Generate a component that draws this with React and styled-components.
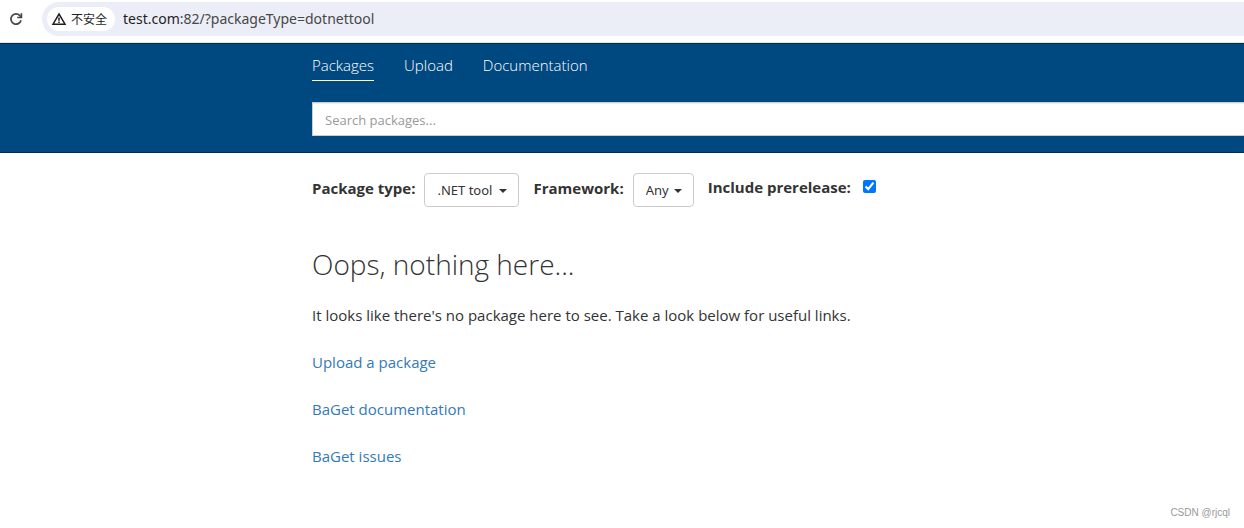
import styled, { createGlobalStyle } from "styled-components";

const GlobalStyle = createGlobalStyle`
  * {
    box-sizing: border-box;
  }

  body {
    margin: 0;
    background: #fff;
    color: #333;
    font-family: "Open Sans", "Noto Sans CJK SC", sans-serif;
    font-size: 15px;
    line-height: 24px;
  }
`;

const AddressBar = styled.div`
  display: flex;
  align-items: center;
  gap: 18px;
  padding: 2px 0 6px 8px;
  border-bottom: 1px solid #dfe6e0;
`;

const ReloadButton = styled.button`
  display: flex;
  padding: 0;
  border: 0;
  background: none;
  color: #474747;
`;

const Omnibox = styled.div`
  display: flex;
  flex: 1;
  align-items: center;
  gap: 8px;
  height: 34px;
  padding-left: 5px;
  border-radius: 17px 0 0 17px;
  background: #ebeef7;
`;

const SecurityChip = styled.span`
  display: flex;
  align-items: center;
  gap: 4px;
  height: 24px;
  padding: 0 8px 0 4px;
  border-radius: 12px;
  background: #fff;
  color: #1f1f1f;
  font-family: "Noto Sans CJK SC", sans-serif;
  font-size: 12px;
`;

const Url = styled.span`
  color: #474747;
  font-family: "Noto Sans", sans-serif;
  font-size: 14px;
`;

Url.Host = styled.span`
  color: #1f1f1f;
`;

const Header = styled.header`
  padding: 9px 0 16px 312px;
  border-top: 1px solid #002d50;
  border-bottom: 1px solid #002d50;
  background: #004880;
`;

const Nav = styled.nav`
  display: flex;
  gap: 30px;
  margin-bottom: 21px;
`;

const NavLink = styled.a`
  height: 28px;
  border-bottom: 1px solid ${(props) => (props.$active ? "#fff" : "transparent")};
  color: #fff;
  font-weight: 300;
  text-decoration: none;
`;

const SearchInput = styled.input`
  display: block;
  width: 100%;
  height: 34px;
  padding: 7px 12px 5px;
  border: 1px solid #ccc;
  border-right: 0;
  border-radius: 0;
  background: #fff;
  box-shadow: inset 0 1px 1px rgba(0, 0, 0, 0.08);
  color: #555;
  font-family: inherit;
  font-size: 13px;

  &::placeholder {
    color: #999;
  }
`;

const Main = styled.main`
  padding: 20px 16px 0 312px;
`;

const Filters = styled.form`
  display: flex;
  align-items: flex-start;
  gap: 14px;
`;

const Filter = styled.div`
  display: flex;
  align-items: ${(props) => props.$align || "center"};
  gap: ${(props) => props.$gap || "9px"};
`;

Filter.Label = styled.label`
  padding: ${(props) => props.$padding || "0 0 4px"};
  font-weight: 700;
  white-space: nowrap;
`;

const SelectWrapper = styled.div`
  position: relative;

  &::after {
    content: "";
    position: absolute;
    top: 16px;
    right: 12px;
    border-top: 4px solid #333;
    border-right: 4px solid transparent;
    border-left: 4px solid transparent;
    pointer-events: none;
  }
`;

const Select = styled.select`
  display: block;
  width: ${(props) => props.$width};
  height: 34px;
  padding: 0 12px;
  border: 1px solid #ccc;
  border-radius: 4px;
  appearance: none;
  background: #fff;
  color: #333;
  font-family: "Noto Sans", sans-serif;
  font-size: 13px;
`;

const Checkbox = styled.input`
  width: 13px;
  height: 13px;
  margin: 7px 0 0;
  accent-color: #0075ff;
`;

const Title = styled.h2`
  margin: 39px 0 21px;
  font-size: 28px;
  font-weight: 300;
  line-height: 36px;
`;

const Paragraph = styled.p`
  margin: 0 0 23px;
`;

const TextLink = styled.a`
  color: #337ab7;
  text-decoration: none;
`;

const Footer = styled.footer`
  padding: 10px 14px 0 0;
  color: #999;
  font-family: "Liberation Sans", Arial, sans-serif;
  font-size: 10px;
  text-align: right;
`;

const ReloadIcon = () => (
  <svg width="16" height="16" viewBox="0 0 16 16" fill="none" stroke="currentColor" strokeWidth="1.7">
    <path d="M13 9.2A5.1 5.1 0 1 1 11.8 4.6L13.2 6" />
    <path d="M13.4 2.2v4.3H9.2" />
  </svg>
);

const WarningIcon = () => (
  <svg width="16" height="16" viewBox="0 0 16 16" fill="none" stroke="currentColor" strokeWidth="1.5">
    <path d="M8 3L14 13.2H2z" />
    <path d="M8 6.4v3.4M8 10.6v1.4" />
  </svg>
);

const links = ["Upload a package", "BaGet documentation", "BaGet issues"];

const App = () => (
  <div>
    <GlobalStyle />
    <AddressBar>
      <ReloadButton type="button" aria-label="Reload">
        <ReloadIcon />
      </ReloadButton>
      <Omnibox>
        <SecurityChip>
          <WarningIcon />
          不安全
        </SecurityChip>
        <Url>
          <Url.Host>test.com</Url.Host>:82/?packageType=dotnettool
        </Url>
      </Omnibox>
    </AddressBar>
    <Header>
      <Nav>
        <NavLink href="#packages" $active>
          Packages
        </NavLink>
        <NavLink href="#upload">Upload</NavLink>
        <NavLink href="#documentation">Documentation</NavLink>
      </Nav>
      <SearchInput type="text" placeholder="Search packages..." aria-label="Search packages" />
    </Header>
    <Main>
      <Filters>
        <Filter>
          <Filter.Label htmlFor="package-type">Package type:</Filter.Label>
          <SelectWrapper>
            <Select id="package-type" $width="95px">
              <option>.NET tool</option>
            </Select>
          </SelectWrapper>
        </Filter>
        <Filter>
          <Filter.Label htmlFor="framework">Framework:</Filter.Label>
          <SelectWrapper>
            <Select id="framework" $width="61px">
              <option>Any</option>
            </Select>
          </SelectWrapper>
        </Filter>
        <Filter $align="flex-start" $gap="12px">
          <Filter.Label htmlFor="prerelease" $padding="2px 0">
            Include prerelease:
          </Filter.Label>
          <Checkbox id="prerelease" type="checkbox" defaultChecked />
        </Filter>
      </Filters>
      <Title>Oops, nothing here...</Title>
      <Paragraph>
        It looks like there's no package here to see. Take a look below for
        useful links.
      </Paragraph>
      {links.map((link) => (
        <Paragraph key={link}>
          <TextLink href="#">{link}</TextLink>
        </Paragraph>
      ))}
    </Main>
    <Footer>CSDN @rjcql</Footer>
  </div>
);

export default App;
